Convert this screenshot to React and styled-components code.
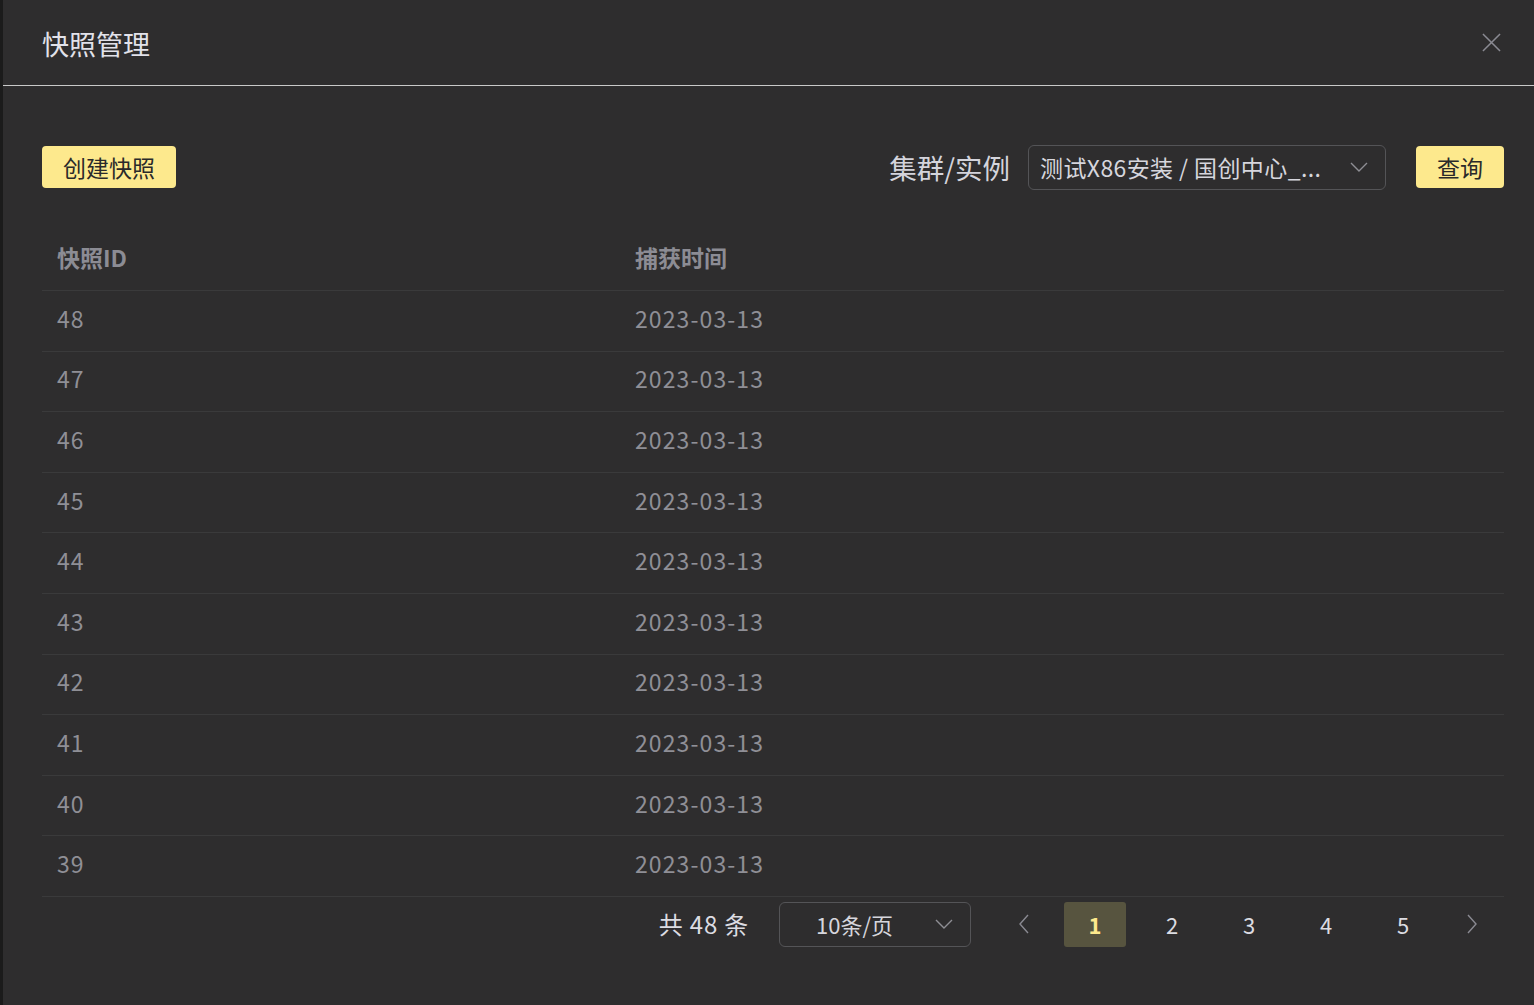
import React from 'react'
import styled, { createGlobalStyle } from 'styled-components'

const GlobalStyle = createGlobalStyle`
    html, body {
        margin: 0;
        padding: 0;
        background: #2e2d2e;
    }
    body {
        font-family: "Noto Sans CJK SC", "Noto Sans", sans-serif;
    }
`

const rows = [48, 47, 46, 45, 44, 43, 42, 41, 40, 39]

function Chevron({ size = 20 }) {
    return (
        <svg width={size} height={size} viewBox="0 0 20 20" fill="none">
            <path d="M2 6l8 8 8-8" stroke="currentColor" strokeWidth="1.4" />
        </svg>
    )
}

function App() {
    return (
        <Modal>
            <GlobalStyle />
            <Header>
                <Title>快照管理</Title>
                <Close aria-label="close">
                    <svg width="19" height="19" viewBox="0 0 20 20">
                        <path d="M1 1l18 18M19 1L1 19" stroke="currentColor" strokeWidth="1.6" />
                    </svg>
                </Close>
            </Header>
            <Body>
                <Toolbar>
                    <YellowButton>创建快照</YellowButton>
                    <Filter>
                        <FilterLabel>集群/实例</FilterLabel>
                        <Select $width="358px">
                            <SelectText>测试X86安装 / 国创中心_...</SelectText>
                            <Chevron />
                        </Select>
                        <YellowButton>查询</YellowButton>
                    </Filter>
                </Toolbar>
                <Table>
                    <HeadRow>
                        <Cell>快照ID</Cell>
                        <Cell>捕获时间</Cell>
                    </HeadRow>
                    {rows.map(id => (
                        <Row key={id}>
                            <Cell>{id}</Cell>
                            <Cell>2023-03-13</Cell>
                        </Row>
                    ))}
                </Table>
                <Pager>
                    <Total>共 48 条</Total>
                    <Select $width="192px" $pad="36px">
                        <SelectText $small>10条/页</SelectText>
                        <Chevron />
                    </Select>
                    <Arrow>
                        <svg width="14" height="22" viewBox="0 0 14 22">
                            <path d="M11 2L3 11l8 9" stroke="currentColor" strokeWidth="1.4" fill="none" />
                        </svg>
                    </Arrow>
                    <PageList>
                        {[1, 2, 3, 4, 5].map(n => (
                            <PageItem key={n} $active={n === 1}>{n}</PageItem>
                        ))}
                    </PageList>
                    <Arrow $next>
                        <svg width="14" height="22" viewBox="0 0 14 22">
                            <path d="M3 2l8 9-8 9" stroke="currentColor" strokeWidth="1.4" fill="none" />
                        </svg>
                    </Arrow>
                </Pager>
            </Body>
        </Modal>
    )
}

const Modal = styled.div`
    height: 1005px;
    box-sizing: border-box;
    border-left: 3px solid #1b1b1b;
    background: #2e2d2e;
    display: flex;
    flex-direction: column;
`

const Header = styled.div`
    height: 86px;
    box-sizing: border-box;
    padding: 0 33px 0 39px;
    border-bottom: 1px solid #c9c9c9;
    display: flex;
    align-items: center;
    justify-content: space-between;
`

const Title = styled.div`
    font-size: 27px;
    color: #e2e2ea;
    margin-top: 2px;
`

const Close = styled.button`
    background: none;
    border: none;
    padding: 0;
    color: #8a8a92;
    cursor: pointer;
    display: flex;
`

const Body = styled.div`
    padding: 59px 30px 0 39px;
`

const Toolbar = styled.div`
    display: flex;
    align-items: center;
    justify-content: space-between;
    height: 44px;
`

const YellowButton = styled.button`
    height: 42px;
    padding: 0 21px;
    background: #fde98d;
    color: #2a2a2a;
    border: none;
    border-radius: 4px;
    font-family: inherit;
    font-size: 23px;
    cursor: pointer;
`

const Filter = styled.div`
    display: flex;
    align-items: center;
    & > ${YellowButton} {
        margin-left: 30px;
    }
`

const FilterLabel = styled.span`
    font-size: 27.5px;
    color: #d4d4dc;
    margin-right: 18px;
`

const Select = styled.div`
    width: ${p => p.$width};
    height: 45px;
    box-sizing: border-box;
    border: 1.5px solid #545457;
    border-radius: 6px;
    display: flex;
    align-items: center;
    justify-content: space-between;
    padding: 0 16px 0 ${p => p.$pad || '11px'};
    color: #8e8e94;
`

const SelectText = styled.span`
    font-size: ${p => (p.$small ? '22px' : '23px')};
    letter-spacing: ${p => (p.$small ? '0' : '0.4px')};
    color: #d6d6dd;
`

const Table = styled.div`
    margin-top: 41px;
    width: 1462px;
`

const Row = styled.div`
    display: grid;
    grid-template-columns: 578px 1fr;
    height: 60.6px;
    box-sizing: border-box;
    border-bottom: 1px solid #3a3a3b;
    align-items: center;
    font-size: 23px;
    letter-spacing: 1.1px;
    color: #8f8f96;
`

const HeadRow = styled(Row)`
    height: 61px;
    font-weight: 700;
    letter-spacing: 0;
    color: #8c8c94;
`

const Cell = styled.div`
    padding-left: 15px;
    padding-bottom: 6px;
`

const Pager = styled.div`
    display: flex;
    align-items: center;
    justify-content: flex-end;
    margin-top: 5px;
    padding-right: 12px;
    height: 45px;
`

const Total = styled.span`
    font-size: 24px;
    letter-spacing: 0.8px;
    color: #dcdce2;
    margin-right: 30px;
    padding-bottom: 2px;
`

const Arrow = styled.div`
    width: 40px;
    height: 45px;
    display: flex;
    align-items: center;
    justify-content: center;
    color: #8a8a92;
    margin-left: ${p => (p.$next ? '18px' : '33px')};
    margin-right: ${p => (p.$next ? '0' : '20px')};
`

const PageList = styled.div`
    display: flex;
    gap: 15px;
`

const PageItem = styled.div`
    width: 62px;
    height: 45px;
    border-radius: 3px;
    display: flex;
    align-items: center;
    justify-content: center;
    font-size: 22px;
    font-weight: ${p => (p.$active ? 700 : 400)};
    color: ${p => (p.$active ? '#fde98d' : '#dcdce2')};
    background: ${p => (p.$active ? '#57543f' : 'transparent')};
`

export default App
